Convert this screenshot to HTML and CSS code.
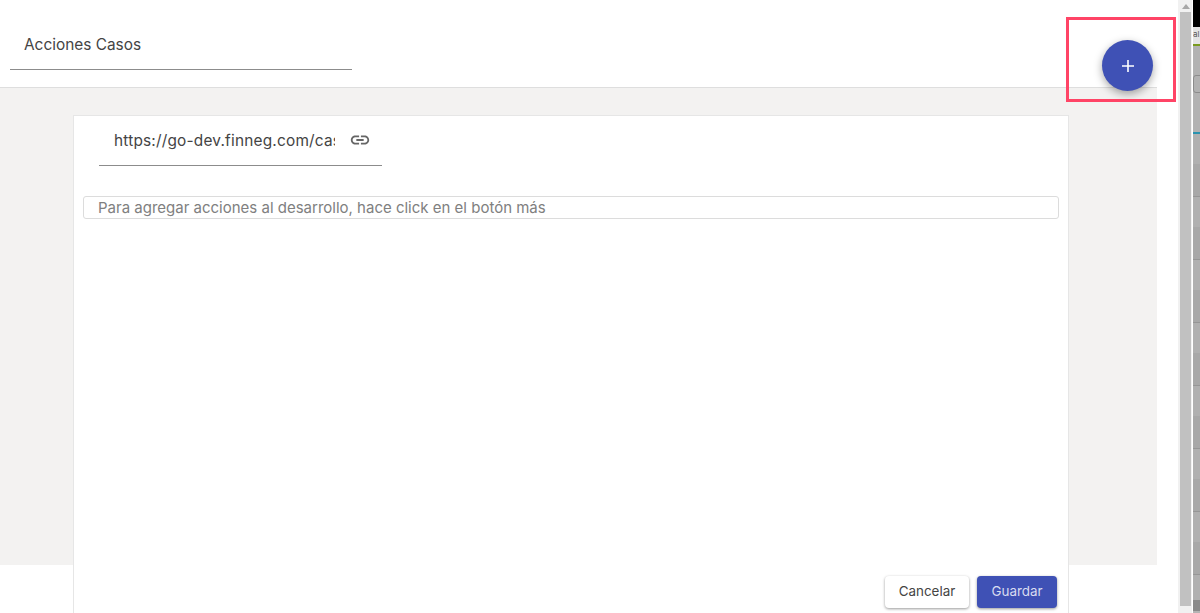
FILE: index.html
```html
<!DOCTYPE html>
<html lang="es">
<head>
<meta charset="utf-8">
<title>Acciones Casos</title>
<link rel="stylesheet" href="styles.css">
</head>
<body>
<div class="window">
  <main class="page">
    <header class="header">
      <div class="title-field"><span class="title">Acciones Casos</span></div>
      <button class="fab" aria-label="Agregar">
        <svg class="fab-icon" viewBox="0 0 14 14"><path d="M7 1v12M1 7h12"/></svg>
      </button>
    </header>
    <section class="stage">
      <div class="card">
        <div class="url-field">
          <span class="url-text">https://go-dev.finneg.com/casos/acciones</span>
          <svg class="link-icon" viewBox="0 0 24 24"><path d="M3.9 12c0-1.71 1.39-3.1 3.1-3.1h4V7H7c-2.76 0-5 2.24-5 5s2.24 5 5 5h4v-1.9H7c-1.71 0-3.1-1.39-3.1-3.1zM8 13h8v-2H8v2zm9-6h-4v1.9h4c1.71 0 3.1 1.39 3.1 3.1s-1.39 3.1-3.1 3.1h-4V17h4c2.76 0 5-2.24 5-5s-2.24-5-5-5z"/></svg>
        </div>
        <div class="hint">Para agregar acciones al desarrollo, hace click en el botón más</div>
        <div class="actions">
          <button class="btn btn-plain">Cancelar</button>
          <button class="btn btn-primary">Guardar</button>
        </div>
      </div>
    </section>
    <div class="annotation"></div>
  </main>
  <div class="scrollbar">
    <div class="arrow"></div>
    <div class="thumb"></div>
  </div>
  <aside class="behind">
    <div class="behind-top"></div>
    <div class="behind-label">al</div>
    <div class="behind-head"><div class="behind-box"></div></div>
    <div class="behind-rows"></div>
    <div class="behind-dark"></div>
  </aside>
</div>
</body>
</html>
```
FILE: styles.css
```css
* { box-sizing: border-box; }
html, body { margin: 0; height: 100%; overflow: hidden; }
body { font-family: "Inter", "Liberation Sans", sans-serif; color: #444; background: #fff; }
.window { display: flex; height: 613px; width: 1200px; }
.page { position: relative; width: 1178px; height: 613px; overflow: hidden; background: #fff; flex: none; }
.header { display: flex; justify-content: space-between; align-items: flex-start; height: 87px; padding: 0 25px 0 10px; }
.title-field { width: 342px; height: 70px; padding: 35px 0 0 14px; border-bottom: 1px solid #8c8c8c; flex: none; }
.title { font-size: 15.4px; line-height: 20px; display: block; }
.fab { width: 51px; height: 51px; margin-top: 40px; border: 0; padding: 0; border-radius: 50%; background: #3f51b5; display: flex; align-items: center; justify-content: center; box-shadow: 0 3px 8px rgba(0,0,0,.35); position: relative; z-index: 2; flex: none; }
.fab-icon { width: 14px; height: 14px; fill: none; stroke: #fff; stroke-width: 1.6; }
.stage { width: 1157px; height: 478px; background: #f3f2f1; border-top: 1px solid #dedede; padding: 27px 88px 0 73px; }
.card { height: 520px; background: #fff; border: 1px solid #e6e6e6; padding: 0 9px; display: flex; flex-direction: column; }
.url-field { display: flex; align-items: center; width: 283px; height: 50px; margin-left: 16px; padding: 0 11px 0 15px; border-bottom: 1px solid #8c8c8c; flex: none; }
.url-text { flex: 1; min-width: 0; overflow: hidden; white-space: nowrap; font-size: 15.4px; letter-spacing: .2px; line-height: 20px; }
.link-icon { width: 22px; height: 22px; fill: #666; margin-left: 14px; flex: none; margin-top: -1px; }
.hint { margin-top: 30px; height: 23px; border: 1px solid #dcdcdc; border-radius: 3px; padding: 1px 14px 0; font-size: 15px; line-height: 20px; color: #808080; flex: none; }
.actions { display: flex; justify-content: flex-end; gap: 8px; margin-top: 357px; padding-right: 2px; }
.btn { height: 32px; border: 0; border-radius: 4px; font-family: inherit; font-size: 13.4px; padding: 0 0 2px; box-shadow: 0 1px 3px rgba(0,0,0,.4); }
.btn-plain { width: 84px; background: #fff; color: #444; }
.btn-primary { width: 80px; background: #3f51b5; color: #d9dcf0; }
.annotation { position: absolute; left: 1066px; top: 17px; width: 110px; height: 85px; border: 3px solid #ff4466; z-index: 3; pointer-events: none; }
.scrollbar { width: 15px; height: 613px; background: #f1f1f1; padding: 0 1px 0 2px; border-right: 1px solid #fff; flex: none; }
.arrow { width: 0; height: 0; margin: 4px auto 3px; border: 4px solid transparent; border-top: 0; border-bottom: 5px solid #a8a8a8; }
.thumb { height: 594px; margin-top: 1px; background: #c1c1c1; }
.behind { flex: 1; display: flex; flex-direction: column; background: #b4b4b4; overflow: hidden; min-width: 0; }
.behind-top { height: 27px; background: #000; flex: none; }
.behind-label { height: 19px; background: #e4e4e4; color: #555; font-size: 8px; line-height: 15px; border-bottom: 2px solid #7a9a1e; flex: none; }
.behind-head { height: 88px; padding-top: 29px; background: #b2b2b2; border-bottom: 2px solid #2a93b0; flex: none; }
.behind-box { width: 16px; height: 18px; border: 1px solid #8c8c8c; border-radius: 3px; }
.behind-rows { height: 466px; flex: none; background: repeating-linear-gradient(#b0b0b0 0, #b0b0b0 30px, #a8a8a8 30px, #a8a8a8 62px, #969696 62px, #969696 63px); }
.behind-dark { height: 11px; background: #8a8a8a; flex: none; }
```
